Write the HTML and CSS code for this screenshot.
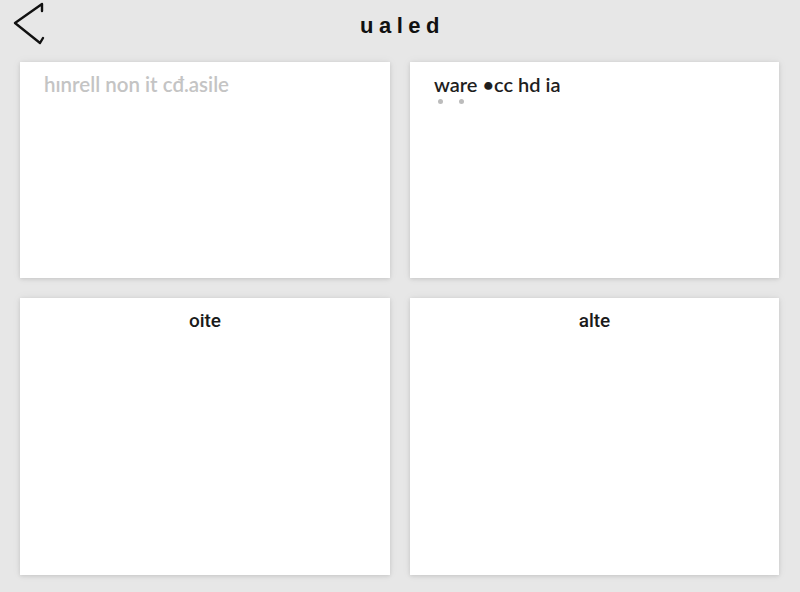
FILE: index.html
```html
<!DOCTYPE html>
<html>
<head>
<meta charset="utf-8">
<link rel="stylesheet" href="styles.css">
</head>
<body>
<div class="page">
  <header class="header">
    <svg class="back" width="40" height="48" viewBox="0 0 40 48">
      <polyline points="30,11 30,4 3,23 28,43 31,38" fill="none" stroke="#111" stroke-width="2.4" stroke-linejoin="round" stroke-linecap="round"/>
    </svg>
    <h1 class="title">ualed</h1>
  </header>
  <main class="grid">
    <section class="card">
      <p class="muted">hınrell non it cđ.asile</p>
    </section>
    <section class="card">
      <p class="dark">ware •cc hd ia</p>
      <div class="dots"><span></span><span></span></div>
    </section>
    <section class="card center">
      <p class="label">oite</p>
    </section>
    <section class="card center">
      <p class="label">alte</p>
    </section>
  </main>
</div>
</body>
</html>
```
FILE: styles.css
```css
html, body {
  margin: 0;
  padding: 0;
  background: #e7e7e7;
  font-family: "Lato", "Open Sans", sans-serif;
}
.page {
  width: 800px;
  height: 592px;
  display: flex;
  flex-direction: column;
}
.header {
  height: 62px;
  position: relative;
  display: flex;
  align-items: center;
  justify-content: center;
}
.back {
  position: absolute;
  left: 12px;
  top: 0px;
}
.title {
  margin: 0 0 10px 0;
  font-family: "Liberation Sans", Arial, sans-serif;
  font-weight: bold;
  font-size: 22px;
  letter-spacing: 5.5px;
  color: #111;
  padding-left: 5px;
}
.grid {
  display: grid;
  grid-template-columns: 370px 369px;
  grid-template-rows: 216px 277px;
  column-gap: 20px;
  row-gap: 20px;
  padding: 0 20px;
}
.card {
  background: #fff;
  box-shadow: 0 1px 4px rgba(0,0,0,0.12), 0 0 10px rgba(0,0,0,0.05);
  padding: 10px 24px;
  box-sizing: border-box;
}
.card p {
  margin: 0;
}
.muted {
  font-size: 20.5px;
  color: #c4c4c4;
  font-weight: 600;
}
.dark {
  font-size: 20px;
  color: #1e1e1e;
  font-weight: 600;
}
.dots {
  display: flex;
  gap: 16px;
  padding-left: 4px;
  margin-top: 3px;
}
.dots span {
  width: 5px;
  height: 5px;
  border-radius: 50%;
  background: #bcbcbc;
}
.center {
  text-align: center;
  padding-top: 11px;
}
.label {
  font-family: "Roboto", sans-serif;
  font-size: 19px;
  color: #1a1a1a;
  font-weight: 500;
}
```
